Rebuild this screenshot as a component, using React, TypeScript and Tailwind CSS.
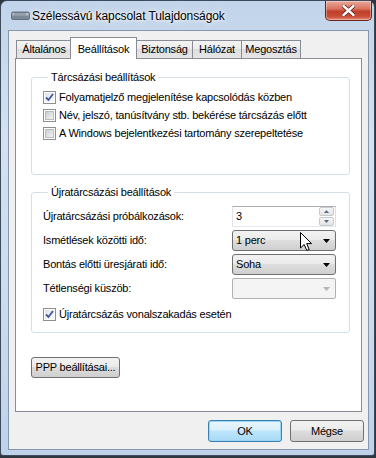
import React from "react";

const btnFace =
  "bg-[linear-gradient(#f2f2f2,#ebebeb_45%,#dddddd_50%,#cfcfcf)] border border-[#707070] rounded-[3px]";

const Checkbox: React.FC<{ checked?: boolean }> = ({ checked }) => (
  <span className="relative flex h-[13px] w-[13px] shrink-0 items-center justify-center border border-[#8e8f8f] bg-white">
    <span
      className={
        checked
          ? "h-[9px] w-[9px] bg-[linear-gradient(135deg,#dfe3ea,#fafafa)]"
          : "h-[9px] w-[9px] border border-[#b7bcc3] bg-[linear-gradient(135deg,#c9cdd3,#f4f4f4)]"
      }
    />
    {checked && (
      <svg className="absolute left-0 top-0" width="11" height="11" viewBox="0 0 11 11">
        <path d="M2 5.5 L4.5 8 L9 2" fill="none" stroke="#3f5a9a" strokeWidth="1.8" />
      </svg>
    )}
  </span>
);

const CheckRow: React.FC<{ checked?: boolean; text: string }> = ({ checked, text }) => (
  <div className="flex h-[18px] items-center gap-[3px]">
    <Checkbox checked={checked} />
    <span>{text}</span>
  </div>
);

const Arrow: React.FC<{ color?: string }> = ({ color = "#000" }) => (
  <svg width="7" height="4" viewBox="0 0 7 4">
    <path d="M0 0 H7 L3.5 4 Z" fill={color} />
  </svg>
);

const Combo: React.FC<{ value: string; children?: React.ReactNode }> = ({ value, children }) => (
  <div className={`relative flex h-[21px] w-[104px] items-center justify-between pl-[3px] pr-[5px] ${btnFace}`}>
    <span>{value}</span>
    <Arrow />
    {children}
  </div>
);

const Cursor: React.FC = () => (
  <svg className="absolute left-[67px] top-[1px]" width="13" height="20" viewBox="0 0 13 20">
    <path
      d="M0.5 0.5 V16 L4.2 12.5 L6.8 18.5 L9.2 17.5 L6.7 11.6 L11.6 11.6 Z"
      fill="#fff"
      stroke="#000"
      strokeWidth="1"
      strokeLinejoin="round"
    />
  </svg>
);

const SpinBox: React.FC<{ value: string }> = ({ value }) => (
  <div className="flex h-[21px] w-[104px] items-center justify-between border border-[#abadb3] border-b-[#e3e9ef] border-l-[#e2e3ea] border-r-[#dbdfe6] bg-white pl-[3px] pr-[1px]">
    <span>{value}</span>
    <div className="flex flex-col gap-[1px]">
      <div className="flex h-[9px] w-[15px] items-center justify-center rounded-[2px] border border-[#c6c9ce] bg-[linear-gradient(#f6f6f6,#e3e3e3)]">
        <svg width="5" height="3" viewBox="0 0 5 3">
          <path d="M0 3 H5 L2.5 0 Z" fill="#5a6a86" />
        </svg>
      </div>
      <div className="flex h-[9px] w-[15px] items-center justify-center rounded-[2px] border border-[#c6c9ce] bg-[linear-gradient(#f6f6f6,#e3e3e3)]">
        <svg width="5" height="3" viewBox="0 0 5 3">
          <path d="M0 0 H5 L2.5 3 Z" fill="#5a6a86" />
        </svg>
      </div>
    </div>
  </div>
);

const FieldRow: React.FC<{ label: string; children: React.ReactNode }> = ({ label, children }) => (
  <div className="flex h-[21px] items-center justify-between">
    <span>{label}</span>
    {children}
  </div>
);

const tabs = ["Általános", "Beállítások", "Biztonság", "Hálózat", "Megosztás"];
const tabWidths = ["w-[56px]", "w-[67px]", "w-[57px]", "w-[50px]", "w-[60px]"];

export default function App() {
  return (
    <div className="h-[458px] w-[376px] bg-[#2e3640] [font-family:'Liberation_Sans',Arial,sans-serif] text-[11px] tracking-[-0.2px] text-black">
      <div className="flex h-[456px] w-[375px] flex-col rounded-t-[7px] rounded-b-[3px] border border-[#3d4b5c] bg-[linear-gradient(180deg,#c2d4ea,#d3e1f1_30%,#cbdbee_70%,#bfd2ea)]">
        {/* title bar */}
        <div className="flex h-[29px] shrink-0 items-start">
          <div className="flex h-full items-center gap-[2px] pl-[10px]">
            <svg width="19" height="9" viewBox="0 0 19 9">
              <path d="M2 1 H17 Q18.5 1 18.5 3 V7 Q18.5 8.5 17 8.5 H2 Q0.5 8.5 0.5 7 V3 Q0.5 1 2 1 Z" fill="#7d8896" stroke="#56606c" strokeWidth="0.8" />
              <path d="M1.5 2 H17.5 V4.5 H1.5 Z" fill="#b9c3cd" />
              <path d="M4 2 V4.5 M6 2 V4.5 M8 2 V4.5 M10 2 V4.5 M12 2 V4.5 M14 2 V4.5" stroke="#6b7684" strokeWidth="0.9" />
            </svg>
            <span className="text-[12px] tracking-[-0.1px] [text-shadow:0_0_6px_#ffffff,0_0_3px_#ffffff]">
              Szélessávú kapcsolat Tulajdonságok
            </span>
          </div>
          <div className="ml-auto mr-[2px] flex h-[20px] w-[47px] items-center justify-center rounded-b-[5px] border border-t-0 border-[#6d2118] bg-[linear-gradient(#e9a99b,#d97560_40%,#c1402b_55%,#c94a34_80%,#e08a73)] shadow-[inset_0_0_0_1px_rgba(255,255,255,0.35)]">
            <svg width="13" height="11" viewBox="0 0 13 11">
              <path d="M1.5 1 L11.5 10 M11.5 1 L1.5 10" stroke="#5a1a12" strokeWidth="4" strokeLinecap="round" />
              <path d="M1.5 1 L11.5 10 M11.5 1 L1.5 10" stroke="#ffffff" strokeWidth="2.4" strokeLinecap="round" />
            </svg>
          </div>
        </div>

        {/* client area */}
        <div className="mb-[5px] ml-[7px] mr-[5px] flex flex-1 flex-col border border-[#8597ae] bg-[#f0f0f0] pt-[6px]">
          {/* tabs */}
          <div className="relative z-10 -mb-px ml-[7px] flex h-[22px] items-end">
            {tabs.map((t, i) =>
              i === 1 ? (
                <div
                  key={t}
                  className={`-mx-px flex h-[22px] ${tabWidths[i]} items-start justify-center border border-b-0 border-[#898c95] bg-white pt-[3px]`}
                >
                  {t}
                </div>
              ) : (
                <div
                  key={t}
                  className={`-mr-px mb-px flex h-[18px] ${tabWidths[i]} items-center justify-center border border-b-0 border-[#898c95] bg-[linear-gradient(#f3f3f3,#ebebeb_50%,#dedede_50%,#e6e6e6)]`}
                >
                  {t}
                </div>
              )
            )}
          </div>

          {/* panel */}
          <div className="mx-[6px] flex h-[354px] flex-col border border-[#898c95] bg-white pl-[15px]">
            <fieldset className="mt-[11px] w-[319px] rounded-[3px] border border-[#d5dfe5] pb-[32px] pl-[11px] pt-[4px]">
              <legend className="ml-[5px] px-[3px] leading-[14px]">Tárcsázási beállítások</legend>
              <CheckRow checked text="Folyamatjelző megjelenítése kapcsolódás közben" />
              <CheckRow text="Név, jelszó, tanúsítvány stb. bekérése tárcsázás előtt" />
              <CheckRow text="A Windows bejelentkezési tartomány szerepeltetése" />
            </fieldset>

            <fieldset className="mt-[10px] w-[319px] rounded-[3px] border border-[#d5dfe5] pb-[9px] pl-[11px] pr-[13px] pt-[7px]">
              <legend className="ml-[5px] px-[3px] leading-[14px]">Újratárcsázási beállítások</legend>
              <div className="flex flex-col gap-[3px]">
                <FieldRow label="Újratárcsázási próbálkozások:">
                  <SpinBox value="3" />
                </FieldRow>
                <FieldRow label="Ismétlések közötti idő:">
                  <Combo value="1 perc">
                    <Cursor />
                  </Combo>
                </FieldRow>
                <FieldRow label="Bontás előtti üresjárati idő:">
                  <Combo value="Soha" />
                </FieldRow>
                <FieldRow label="Tétlenségi küszöb:">
                  <div className="flex h-[21px] w-[104px] items-center justify-end rounded-[2px] border border-[#adb2b5] bg-[#f4f4f4] pr-[5px]">
                    <Arrow color="#b4b4b4" />
                  </div>
                </FieldRow>
              </div>
              <div className="mt-[6px]">
                <CheckRow checked text="Újratárcsázás vonalszakadás esetén" />
              </div>
            </fieldset>

            <button className={`mt-[24px] flex h-[21px] w-[89px] items-center justify-center ${btnFace}`}>
              PPP beállításai...
            </button>
          </div>

          {/* dialog buttons */}
          <div className="mt-[8px] flex justify-end gap-[8px] pr-[4px]">
            <button className="flex h-[22px] w-[74px] items-center justify-center rounded-[3px] border border-[#3c7fb1] bg-[linear-gradient(#eaf6fd,#d9f0fc_45%,#bee6fd_50%,#a7d9f5)] shadow-[inset_0_0_0_1px_#97d5f5]">
              OK
            </button>
            <button className={`flex h-[22px] w-[74px] items-center justify-center ${btnFace}`}>Mégse</button>
          </div>
        </div>
      </div>
    </div>
  );
}
